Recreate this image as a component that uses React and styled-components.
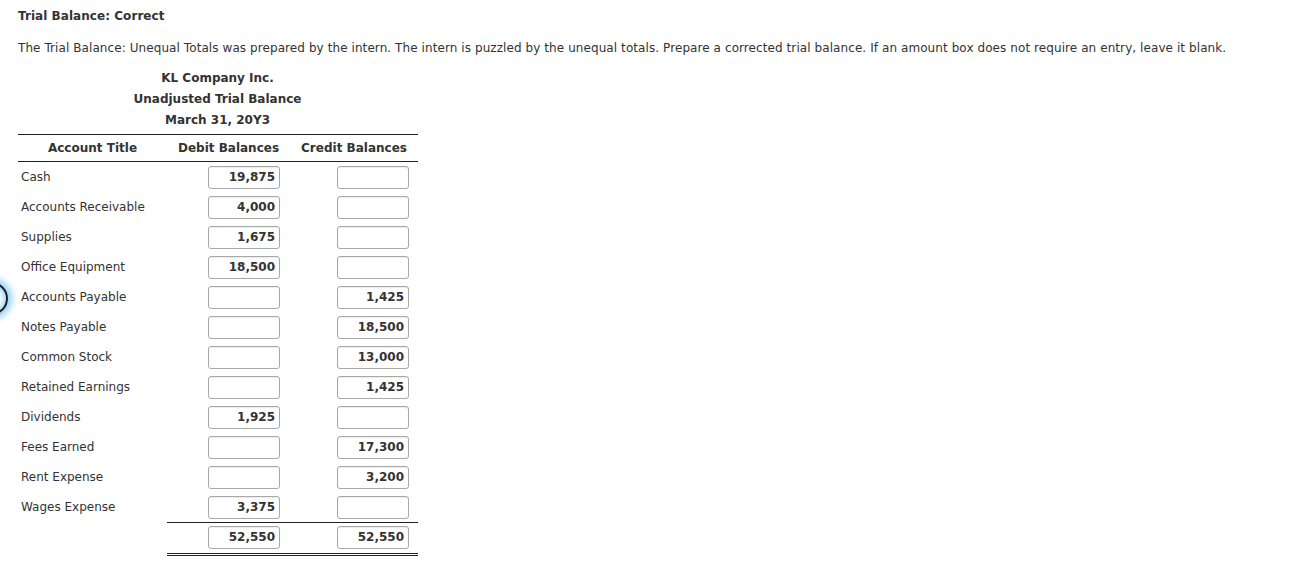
import React from "react";
import styled, { createGlobalStyle } from "styled-components";

const GlobalStyle = createGlobalStyle`
  html, body { margin: 0; padding: 0; background: #fff; }
  body { font-family: Verdana, "DejaVu Sans", sans-serif; color: #333; }
`;

const Page = styled.div`
  position: relative;
  padding: 9px 18px 20px 18px;
  font-size: 12px;
`;

const Title = styled.h1`
  margin: 0;
  font-size: 12px;
  font-weight: bold;
  line-height: 14px;
  letter-spacing: 0.05px;
`;

const Instructions = styled.p`
  margin: 18px 0 0 0;
  font-size: 12px;
  line-height: 14px;
  letter-spacing: 0.08px;
`;

const Statement = styled.div`
  width: 400px;
  margin-top: 13px;
`;

const Heading = styled.div`
  text-align: center;
  font-weight: bold;
  line-height: 21px;
  padding-right: 1px;
`;

const Grid = styled.div`
  display: grid;
  grid-template-columns: 149px 123px 128px;
  margin-top: 3px;
`;

const HeaderCell = styled.div`
  font-weight: bold;
  text-align: center;
  padding: 6px 0 6px;
  line-height: 14px;
  border-top: 1px solid #222;
  border-bottom: 1px solid #222;
`;

const Label = styled.div`
  display: flex;
  align-items: center;
  height: 30px;
  padding-left: 3px;
  color: #333;
`;

const AmountCell = styled.div`
  display: flex;
  align-items: center;
  justify-content: flex-end;
  height: 30px;
  padding-right: ${(p) => p.$pad}px;
  box-sizing: border-box;
`;

const TotalCell = styled.div`
  display: flex;
  align-items: flex-start;
  justify-content: flex-end;
  height: 34px;
  padding-top: 3px;
  padding-right: ${(p) => p.$pad}px;
  border-top: 1px solid #222;
  border-bottom: 3px double #222;
  box-sizing: border-box;
`;

const Box = styled.div`
  width: 72px;
  height: 23px;
  box-sizing: border-box;
  border: 1px solid #a8a8a8;
  border-radius: 3px;
  box-shadow: inset 0 1px 1px rgba(0, 0, 0, 0.08);
  background: #fff;
  font-weight: bold;
  font-size: 12px;
  color: #333;
  text-align: right;
  padding: 0 4px;
  line-height: 21px;
`;

const Ring = styled.div`
  position: absolute;
  left: -25px;
  top: 282px;
  width: 29px;
  height: 29px;
  border: 2px solid #1c1c1c;
  border-radius: 50%;
  box-shadow: 0 0 6px 4px rgba(110, 195, 245, 0.75), inset 0 0 5px 3px rgba(110, 195, 245, 0.6);
`;

const rows = [
  ["Cash", "19,875", ""],
  ["Accounts Receivable", "4,000", ""],
  ["Supplies", "1,675", ""],
  ["Office Equipment", "18,500", ""],
  ["Accounts Payable", "", "1,425"],
  ["Notes Payable", "", "18,500"],
  ["Common Stock", "", "13,000"],
  ["Retained Earnings", "", "1,425"],
  ["Dividends", "1,925", ""],
  ["Fees Earned", "", "17,300"],
  ["Rent Expense", "", "3,200"],
  ["Wages Expense", "3,375", ""],
];

export default function App() {
  return (
    <Page>
      <GlobalStyle />
      <Ring />
      <Title>Trial Balance: Correct</Title>
      <Instructions>
        The Trial Balance: Unequal Totals was prepared by the intern. The intern is puzzled by the unequal totals. Prepare a corrected trial balance. If an amount box does not require an entry, leave it blank.
      </Instructions>
      <Statement>
        <Heading>KL Company Inc.</Heading>
        <Heading>Unadjusted Trial Balance</Heading>
        <Heading>March 31, 20Y3</Heading>
        <Grid>
          <HeaderCell>Account Title</HeaderCell>
          <HeaderCell>Debit Balances</HeaderCell>
          <HeaderCell>Credit Balances</HeaderCell>
          {rows.map(([name, dr, cr]) => (
            <React.Fragment key={name}>
              <Label>{name}</Label>
              <AmountCell $pad={10}>
                <Box>{dr}</Box>
              </AmountCell>
              <AmountCell $pad={9}>
                <Box>{cr}</Box>
              </AmountCell>
            </React.Fragment>
          ))}
          <Label />
          <TotalCell $pad={10}>
            <Box>52,550</Box>
          </TotalCell>
          <TotalCell $pad={9}>
            <Box>52,550</Box>
          </TotalCell>
        </Grid>
      </Statement>
    </Page>
  );
}
